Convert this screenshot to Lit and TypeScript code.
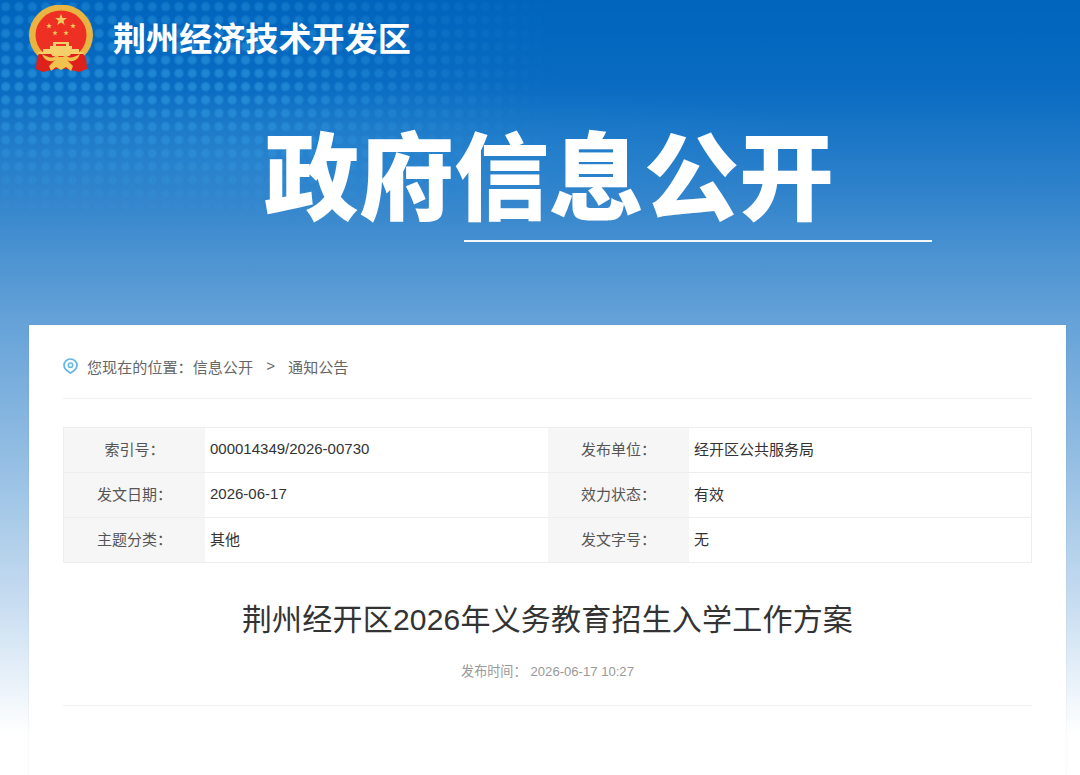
import { LitElement, html, css, svg } from 'lit';
import { customElement } from 'lit/decorators.js';

const star = (x: number, y: number, r: number) => {
  const pts: string[] = [];
  for (let i = 0; i < 10; i++) {
    const a = -Math.PI / 2 + (i * Math.PI) / 5;
    const rad = i % 2 ? r * 0.42 : r;
    pts.push(`${(x + rad * Math.cos(a)).toFixed(2)},${(y + rad * Math.sin(a)).toFixed(2)}`);
  }
  return svg`<polygon points=${pts.join(' ')} fill="#f4c75a" />`;
};

const emblem = html`
  <svg class="emblem" viewBox="0 0 64 70" width="64" height="70">
    <ellipse cx="32" cy="30" rx="32" ry="30.5" fill="#e9b440" />
    <ellipse cx="32" cy="30" rx="25.5" ry="24.5" fill="#ee2f24" />
    ${star(32, 15, 6.2)} ${star(20, 21, 3)} ${star(44, 21, 3)} ${star(26, 28, 2.8)} ${star(37, 28, 2.8)}
    <path d="M24 37 H40 V41 H43 V44 H50 V47 H55 L52 51 L12 51 L9 47 H14 V44 H21 V41 H24 Z" fill="#f5cf6a" />
    <path d="M27 39 H37 V41 H27 Z" fill="#ee2f24" />
    <path d="M10 49 H22 L26 54 H38 L42 49 H54 L57 52 L58 64 L50 67 L42 65 L32 63 L22 65 L14 67 L7 64 L8 52 Z" fill="#df211b" />
    <path d="M13 49 C20 53 24 54 27 50 L30 52 H34 L37 50 C40 54 44 53 51 49 L49 53 C45 57 41 57 38 55 L44 61 L42 66 L37 62 L32 65 L27 62 L22 66 L20 61 L26 55 C23 57 19 57 15 53 Z" fill="#f2c24e" />
  </svg>
`;

const rows = [
  ['索引号：', '000014349/2026-00730', '发布单位：', '经开区公共服务局'],
  ['发文日期：', '2026-06-17', '效力状态：', '有效'],
  ['主题分类：', '其他', '发文字号：', '无'],
];

@customElement('app-root')
export class AppRoot extends LitElement {
  static styles = css`
    :host {
      display: block;
      position: relative;
      width: 1080px;
      height: 775px;
      overflow: hidden;
      font-family: 'Liberation Sans', 'Noto Sans CJK SC', sans-serif;
      background:
        radial-gradient(ellipse 520px 70px at 340px 150px, rgba(60, 160, 225, 0.22), transparent 100%),
        linear-gradient(
          180deg,
          #0064bd 0,
          #0a6cc2 90px,
          #2f82cb 190px,
          #4d94d2 260px,
          #65a2d8 322px,
          #94bee3 460px,
          #c6dcf0 600px,
          #f3f8fc 705px,
          #fff 735px
        );
    }
    .dots {
      position: absolute;
      left: 0;
      top: 0;
      width: 560px;
      height: 230px;
      background-image: radial-gradient(circle, rgba(56, 165, 230, 0.55) 0, rgba(56, 165, 230, 0.48) 3.4px, transparent 5.6px);
      background-size: 13.33px 13.33px;
      background-position: -1px 0;
      -webkit-mask-image: linear-gradient(180deg, rgba(0, 0, 0, 0.6) 0, #000 40%, transparent 100%), linear-gradient(90deg, #000 45%, transparent 100%);
      -webkit-mask-composite: source-in;
      mask-composite: intersect;
    }
    .page {
      position: relative;
    }
    .brand {
      display: flex;
      align-items: center;
      height: 78px;
      padding: 2px 0 0 29px;
      box-sizing: border-box;
      gap: 20px;
    }
    .emblem {
      display: block;
      flex: none;
    }
    .brand-name {
      font-size: 33.1px;
      font-weight: 700;
      color: #fff;
      line-height: 40px;
    }
    .hero {
      height: 247px;
      box-sizing: border-box;
      padding-left: 264px;
    }
    .hero h1 {
      margin: 0;
      padding-top: 47px;
      font-size: 95px;
      line-height: 110px;
      font-weight: 900;
      color: #fff;
      white-space: nowrap;
    }
    .hero-rule {
      width: 468px;
      height: 2px;
      margin: 5px 0 0 200px;
      background: #f4f8fc;
    }
    .card {
      margin: 0 14px 0 29px;
      height: 450px;
      box-sizing: border-box;
      padding: 0 34px;
      background: #fff;
      box-shadow: 0 0 2px rgba(0, 0, 0, 0.08);
    }
    .crumbs {
      display: flex;
      align-items: center;
      height: 74px;
      padding-top: 8px;
      box-sizing: border-box;
      border-bottom: 1px solid #f1f1f1;
      font-size: 15.1px;
      color: #666;
    }
    .crumbs svg {
      margin-right: 9px;
      flex: none;
    }
    .crumbs .sep {
      margin: 0 13px;
      width: 9px;
      text-align: center;
    }
    .meta-table {
      display: grid;
      grid-template-columns: 141px 343px 141px 1fr;
      margin-top: 28px;
      border: 1px solid #eee;
      border-bottom: 0;
      font-size: 15px;
      color: #333;
    }
    .cell {
      display: flex;
      align-items: center;
      height: 44px;
      border-bottom: 1px solid #eee;
      padding-left: 5px;
    }
    .cell span {
      display: block;
      margin-bottom: 3px;
    }
    .cell.label {
      justify-content: center;
      padding-left: 0;
      background: #f6f6f6;
      color: #555;
    }
    .doc-title {
      margin: 38px 0 0;
      font-size: 30px;
      letter-spacing: 0.2px;
      line-height: 38px;
      font-weight: 400;
      color: #333;
      text-align: center;
    }
    .doc-meta {
      display: flex;
      justify-content: center;
      gap: 4px;
      margin-top: 23px;
      padding-bottom: 23px;
      line-height: 20px;
      font-size: 13.1px;
      color: #999;
      border-bottom: 1px solid #f1f1f1;
    }
  `;

  render() {
    return html`
      <div class="dots"></div>
      <div class="page">
        <header class="brand">
          ${emblem}
          <div class="brand-name">荆州经济技术开发区</div>
        </header>
        <section class="hero">
          <h1>政府信息公开</h1>
          <div class="hero-rule"></div>
        </section>
        <main class="card">
          <nav class="crumbs">
            <svg viewBox="0 0 15 16" width="15" height="16">
              <path d="M7.5 1 C3.8 1 1 3.8 1 7.2 C1 10.4 4 13 7.5 15 C11 13 14 10.4 14 7.2 C14 3.8 11.2 1 7.5 1 Z" fill="none" stroke="#63b8e8" stroke-width="1.7" />
              <circle cx="7.5" cy="7.2" r="2.2" fill="none" stroke="#63b8e8" stroke-width="1.5" />
            </svg>
            <span>您现在的位置：</span><span>信息公开</span><span class="sep">&gt;</span><span>通知公告</span>
          </nav>
          <div class="meta-table">
            ${rows.map(
              (r) => html`
                <div class="cell label"><span>${r[0]}</span></div>
                <div class="cell"><span>${r[1]}</span></div>
                <div class="cell label"><span>${r[2]}</span></div>
                <div class="cell"><span>${r[3]}</span></div>
              `
            )}
          </div>
          <h2 class="doc-title">荆州经开区2026年义务教育招生入学工作方案</h2>
          <div class="doc-meta"><span>发布时间：</span><span>2026-06-17 10:27</span></div>
        </main>
      </div>
    `;
  }
}
